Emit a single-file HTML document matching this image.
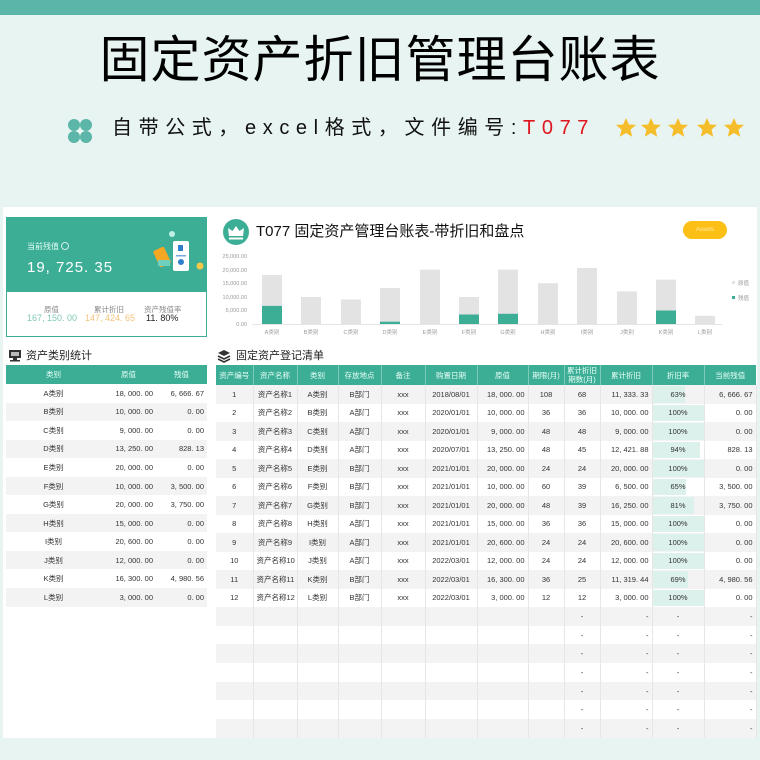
<!DOCTYPE html>
<html><head><meta charset="utf-8">
<style>
*{margin:0;padding:0;box-sizing:border-box}
body{width:760px;height:760px;background:#e8f4f2;position:relative;overflow:hidden;font-family:"Liberation Sans","Noto Sans CJK SC",sans-serif;color:#333}
.abs{position:absolute}
.top{left:0;top:0;width:760px;height:15px;background:#5bb5a8}
.title{left:0;top:28px;width:760px;text-align:center;font-size:50px;color:#000;letter-spacing:1px;line-height:64px}
.sub{left:112px;top:114px;font-size:20px;letter-spacing:6.6px;color:#111;line-height:28px}
.sub span{color:#e0141e}
.panel{background:#fff}
table{border-collapse:collapse;table-layout:fixed;position:absolute;font-size:7.5px}
td{text-align:center;white-space:nowrap;overflow:hidden;color:#333;padding:0 3px}
th{background:#3dae96;color:#e8fff8;font-weight:normal;font-size:7.5px;border-right:1px solid #7fcab9;line-height:9px}
tr.g td{background:#f3f3f3}
.rt td.r{text-align:right}
.rb td{border-right:1px solid #e6e6e6}
.rate{position:relative}
.rate i{position:absolute;left:0;top:1px;bottom:1px;background:#dcf1eb;display:block}
.rate b{position:relative;font-weight:normal}
</style></head><body>
<div class="abs top"></div>
<div class="abs" style="left:3px;top:207px;width:754px;height:531px;background:#fff"></div>
<div class="abs title">固定资产折旧管理台账表</div>
<svg class="abs" style="left:67px;top:118px" width="26" height="26" viewBox="0 0 26 26">
<g fill="#5bb5a8"><circle cx="7" cy="7" r="6"/><circle cx="19" cy="7" r="6"/><circle cx="7" cy="19" r="6"/><circle cx="19" cy="19" r="6"/></g></svg>
<div class="abs sub">自带公式，excel格式，文件编号:<span>T077</span></div>
<svg class="abs" style="left:614px;top:116px" width="136" height="24" viewBox="0 0 136 24">
<defs><path id="st" d="M0,-10 L2.9,-3.5 10,-3.1 4.5,1.6 6.2,8.8 0,5 -6.2,8.8 -4.5,1.6 -10,-3.1 -2.9,-3.5Z" fill="#f6bd2a"/></defs>
<use href="#st" x="12" y="12"/><use href="#st" x="37" y="12"/><use href="#st" x="64" y="12"/><use href="#st" x="93" y="12"/><use href="#st" x="120" y="12"/></svg>

<!-- left top card -->
<div class="abs" style="left:6px;top:217px;width:201px;height:75px;background:#3dae96"></div>
<div class="abs" style="left:27px;top:241px;font-size:8px;color:#e6fff8">当前残值 <span style="display:inline-block;width:8px;height:8px;border-radius:50%;border:1px solid #cfeee6;vertical-align:-1px"></span></div>
<div class="abs" style="left:27px;top:259px;font-size:15px;color:#fff;letter-spacing:1px">19, 725. 35</div>
<svg class="abs" style="left:150px;top:230px" width="60" height="52" viewBox="0 0 60 52">
<circle cx="22" cy="4" r="3" fill="#bff0e6"/>
<rect x="6" y="18" width="12" height="18" rx="2" fill="#f5a623" transform="rotate(-25 12 27)"/>
<rect x="8" y="30" width="12" height="6" fill="#6fd0bd"/>
<rect x="23" y="11" width="16" height="30" rx="2" fill="#fff"/>
<rect x="28" y="15" width="5" height="6" fill="#2f7fd0"/>
<rect x="26" y="25" width="10" height="1.5" fill="#7aa8e0"/>
<circle cx="31" cy="32" r="3" fill="#2f7fd0"/>
<circle cx="50" cy="36" r="3.5" fill="#f8c84a"/>
</svg>
<div class="abs" style="left:6px;top:292px;width:201px;height:45px;background:#fff;border:1px solid #3dae96;border-top:none"></div>
<div class="abs" style="left:44px;top:304px;font-size:7.5px;color:#888">原值</div>
<div class="abs" style="left:94px;top:304px;font-size:7.5px;color:#888">累计折旧</div>
<div class="abs" style="left:144px;top:304px;font-size:7.5px;color:#888">资产残值率</div>
<div class="abs" style="left:27px;top:313px;font-size:9px;color:#7fc8b7">167, 150. 00</div>
<div class="abs" style="left:85px;top:313px;font-size:9px;color:#f4c37a">147, 424. 65</div>
<div class="abs" style="left:146px;top:313px;font-size:9px;color:#222">11. 80%</div>

<!-- left table panel -->
<svg class="abs" style="left:8px;top:349px" width="14" height="13" viewBox="0 0 14 13"><rect x="1" y="1" width="12" height="8" fill="#333"/><rect x="3" y="3" width="8" height="4" fill="#bbb"/><rect x="5" y="9" width="4" height="2" fill="#333"/><rect x="2" y="11" width="10" height="1.5" fill="#333"/></svg>
<div class="abs" style="left:26px;top:347px;font-size:11px;color:#222">资产类别统计</div>
<table class="rt" style="left:6px;top:365px;width:201px">
<colgroup><col style="width:95px"><col style="width:55px"><col style="width:51px"></colgroup>
<tr style="height:19px"><th style="border:none">类别</th><th style="border:none">原值</th><th style="border:none">残值</th></tr>
<tr style="height:18.55px"><td>A类别</td><td class="r">18, 000. 00</td><td class="r">6, 666. 67</td></tr>
<tr class="g" style="height:18.55px"><td>B类别</td><td class="r">10, 000. 00</td><td class="r">0. 00</td></tr>
<tr style="height:18.55px"><td>C类别</td><td class="r">9, 000. 00</td><td class="r">0. 00</td></tr>
<tr class="g" style="height:18.55px"><td>D类别</td><td class="r">13, 250. 00</td><td class="r">828. 13</td></tr>
<tr style="height:18.55px"><td>E类别</td><td class="r">20, 000. 00</td><td class="r">0. 00</td></tr>
<tr class="g" style="height:18.55px"><td>F类别</td><td class="r">10, 000. 00</td><td class="r">3, 500. 00</td></tr>
<tr style="height:18.55px"><td>G类别</td><td class="r">20, 000. 00</td><td class="r">3, 750. 00</td></tr>
<tr class="g" style="height:18.55px"><td>H类别</td><td class="r">15, 000. 00</td><td class="r">0. 00</td></tr>
<tr style="height:18.55px"><td>I类别</td><td class="r">20, 600. 00</td><td class="r">0. 00</td></tr>
<tr class="g" style="height:18.55px"><td>J类别</td><td class="r">12, 000. 00</td><td class="r">0. 00</td></tr>
<tr style="height:18.55px"><td>K类别</td><td class="r">16, 300. 00</td><td class="r">4, 980. 56</td></tr>
<tr class="g" style="height:18.55px"><td>L类别</td><td class="r">3, 000. 00</td><td class="r">0. 00</td></tr>
</table>

<!-- chart panel -->
<svg class="abs" style="left:222px;top:218px" width="28" height="28" viewBox="0 0 28 28"><circle cx="14" cy="14" r="13" fill="#3dae96"/><path d="M7,18 L6,10 L10.5,13 L14,8 L17.5,13 L22,10 L21,18Z" fill="#fff"/><rect x="7" y="19.5" width="14" height="2" fill="#fff"/></svg>
<div class="abs" style="left:256px;top:220px;font-size:15px;color:#111">T077 固定资产管理台账表-带折旧和盘点</div>
<div class="abs" style="left:683px;top:221px;width:44px;height:18px;border-radius:9px;background:#fbbf16;color:#ffe9a8;font-size:6px;text-align:center;line-height:18px">Assets</div>
<svg class="abs" style="left:215px;top:245px" width="545" height="95" viewBox="215 245 545 95" font-size="5.5" fill="#999" font-family="Liberation Sans, Noto Sans CJK SC, sans-serif">
<g text-anchor="end"><text x="247" y="258">25,000.00</text><text x="247" y="272">20,000.00</text><text x="247" y="285">15,000.00</text><text x="247" y="299">10,000.00</text><text x="247" y="312">5,000.00</text><text x="247" y="326">0.00</text></g>
<line x1="252" y1="324.5" x2="722" y2="324.5" stroke="#e6e6e6" stroke-width="1"/>
<g fill="#e3e3e3">
<rect x="262" y="275" width="20" height="49"/><rect x="301" y="297" width="20" height="27"/><rect x="341" y="299.5" width="20" height="24.5"/><rect x="380" y="288" width="20" height="36"/><rect x="420" y="269.6" width="20" height="54.4"/><rect x="459" y="297" width="20" height="27"/><rect x="498" y="269.6" width="20" height="54.4"/><rect x="538" y="283.2" width="20" height="40.8"/><rect x="577" y="268" width="20" height="56"/><rect x="617" y="291.4" width="20" height="32.6"/><rect x="656" y="279.7" width="20" height="44.3"/><rect x="695" y="315.8" width="20" height="8.2"/></g>
<g fill="#3dae96"><rect x="262" y="305.9" width="20" height="18.1"/><rect x="380" y="321.7" width="20" height="2.3"/><rect x="459" y="314.5" width="20" height="9.5"/><rect x="498" y="313.8" width="20" height="10.2"/><rect x="656" y="310.5" width="20" height="13.5"/></g>
<g text-anchor="middle"><text x="272" y="334">A类别</text><text x="311" y="334">B类别</text><text x="351" y="334">C类别</text><text x="390" y="334">D类别</text><text x="430" y="334">E类别</text><text x="469" y="334">F类别</text><text x="508" y="334">G类别</text><text x="548" y="334">H类别</text><text x="587" y="334">I类别</text><text x="627" y="334">J类别</text><text x="666" y="334">K类别</text><text x="705" y="334">L类别</text></g>
<rect x="732" y="281" width="3" height="3" fill="#e3e3e3"/><text x="738" y="285">原值</text>
<rect x="732" y="296" width="3" height="3" fill="#3dae96"/><text x="738" y="300">残值</text>
</svg>

<!-- right table -->
<svg class="abs" style="left:217px;top:349px" width="14" height="14" viewBox="0 0 14 14"><path d="M7,1 L13,4 L7,7 L1,4Z" fill="#333"/><path d="M1,7 L7,10 L13,7 M1,10 L7,13 L13,10" stroke="#333" stroke-width="1.6" fill="none"/></svg>
<div class="abs" style="left:236px;top:347px;font-size:11px;color:#222">固定资产登记清单</div>
<table class="rt rb" style="left:216px;top:365px;width:540px">
<colgroup><col style="width:37px"><col style="width:44px"><col style="width:41px"><col style="width:43px"><col style="width:44px"><col style="width:52px"><col style="width:51px"><col style="width:36px"><col style="width:36px"><col style="width:52px"><col style="width:52px"><col style="width:52px"></colgroup>
<tr style="height:20px"><th>资产编号</th><th>资产名称</th><th>类别</th><th>存放地点</th><th>备注</th><th>购置日期</th><th>原值</th><th>期限(月)</th><th>累计折旧<br>期数(月)</th><th>累计折旧</th><th>折旧率</th><th style="border:none">当前残值</th></tr>
<tr class="g" style="height:18.5px"><td>1</td><td>资产名称1</td><td>A类别</td><td>B部门</td><td>xxx</td><td>2018/08/01</td><td class="r">18, 000. 00</td><td>108</td><td>68</td><td class="r">11, 333. 33</td><td class="rate"><i style="width:63%"></i><b>63%</b></td><td class="r">6, 666. 67</td></tr>
<tr style="height:18.5px"><td>2</td><td>资产名称2</td><td>B类别</td><td>A部门</td><td>xxx</td><td>2020/01/01</td><td class="r">10, 000. 00</td><td>36</td><td>36</td><td class="r">10, 000. 00</td><td class="rate"><i style="width:100%"></i><b>100%</b></td><td class="r">0. 00</td></tr>
<tr class="g" style="height:18.5px"><td>3</td><td>资产名称3</td><td>C类别</td><td>A部门</td><td>xxx</td><td>2020/01/01</td><td class="r">9, 000. 00</td><td>48</td><td>48</td><td class="r">9, 000. 00</td><td class="rate"><i style="width:100%"></i><b>100%</b></td><td class="r">0. 00</td></tr>
<tr style="height:18.5px"><td>4</td><td>资产名称4</td><td>D类别</td><td>A部门</td><td>xxx</td><td>2020/07/01</td><td class="r">13, 250. 00</td><td>48</td><td>45</td><td class="r">12, 421. 88</td><td class="rate"><i style="width:94%"></i><b>94%</b></td><td class="r">828. 13</td></tr>
<tr class="g" style="height:18.5px"><td>5</td><td>资产名称5</td><td>E类别</td><td>B部门</td><td>xxx</td><td>2021/01/01</td><td class="r">20, 000. 00</td><td>24</td><td>24</td><td class="r">20, 000. 00</td><td class="rate"><i style="width:100%"></i><b>100%</b></td><td class="r">0. 00</td></tr>
<tr style="height:18.5px"><td>6</td><td>资产名称6</td><td>F类别</td><td>B部门</td><td>xxx</td><td>2021/01/01</td><td class="r">10, 000. 00</td><td>60</td><td>39</td><td class="r">6, 500. 00</td><td class="rate"><i style="width:65%"></i><b>65%</b></td><td class="r">3, 500. 00</td></tr>
<tr class="g" style="height:18.5px"><td>7</td><td>资产名称7</td><td>G类别</td><td>B部门</td><td>xxx</td><td>2021/01/01</td><td class="r">20, 000. 00</td><td>48</td><td>39</td><td class="r">16, 250. 00</td><td class="rate"><i style="width:81%"></i><b>81%</b></td><td class="r">3, 750. 00</td></tr>
<tr style="height:18.5px"><td>8</td><td>资产名称8</td><td>H类别</td><td>A部门</td><td>xxx</td><td>2021/01/01</td><td class="r">15, 000. 00</td><td>36</td><td>36</td><td class="r">15, 000. 00</td><td class="rate"><i style="width:100%"></i><b>100%</b></td><td class="r">0. 00</td></tr>
<tr class="g" style="height:18.5px"><td>9</td><td>资产名称9</td><td>I类别</td><td>A部门</td><td>xxx</td><td>2021/01/01</td><td class="r">20, 600. 00</td><td>24</td><td>24</td><td class="r">20, 600. 00</td><td class="rate"><i style="width:100%"></i><b>100%</b></td><td class="r">0. 00</td></tr>
<tr style="height:18.5px"><td>10</td><td>资产名称10</td><td>J类别</td><td>A部门</td><td>xxx</td><td>2022/03/01</td><td class="r">12, 000. 00</td><td>24</td><td>24</td><td class="r">12, 000. 00</td><td class="rate"><i style="width:100%"></i><b>100%</b></td><td class="r">0. 00</td></tr>
<tr class="g" style="height:18.5px"><td>11</td><td>资产名称11</td><td>K类别</td><td>B部门</td><td>xxx</td><td>2022/03/01</td><td class="r">16, 300. 00</td><td>36</td><td>25</td><td class="r">11, 319. 44</td><td class="rate"><i style="width:69%"></i><b>69%</b></td><td class="r">4, 980. 56</td></tr>
<tr style="height:18.5px"><td>12</td><td>资产名称12</td><td>L类别</td><td>B部门</td><td>xxx</td><td>2022/03/01</td><td class="r">3, 000. 00</td><td>12</td><td>12</td><td class="r">3, 000. 00</td><td class="rate"><i style="width:100%"></i><b>100%</b></td><td class="r">0. 00</td></tr>
<tr class="g" style="height:18.7px"><td></td><td></td><td></td><td></td><td></td><td></td><td></td><td></td><td>-</td><td class="r">-</td><td>-</td><td class="r">-</td></tr>
<tr style="height:18.7px"><td></td><td></td><td></td><td></td><td></td><td></td><td></td><td></td><td>-</td><td class="r">-</td><td>-</td><td class="r">-</td></tr>
<tr class="g" style="height:18.7px"><td></td><td></td><td></td><td></td><td></td><td></td><td></td><td></td><td>-</td><td class="r">-</td><td>-</td><td class="r">-</td></tr>
<tr style="height:18.7px"><td></td><td></td><td></td><td></td><td></td><td></td><td></td><td></td><td>-</td><td class="r">-</td><td>-</td><td class="r">-</td></tr>
<tr class="g" style="height:18.7px"><td></td><td></td><td></td><td></td><td></td><td></td><td></td><td></td><td>-</td><td class="r">-</td><td>-</td><td class="r">-</td></tr>
<tr style="height:18.7px"><td></td><td></td><td></td><td></td><td></td><td></td><td></td><td></td><td>-</td><td class="r">-</td><td>-</td><td class="r">-</td></tr>
<tr class="g" style="height:18.7px"><td></td><td></td><td></td><td></td><td></td><td></td><td></td><td></td><td>-</td><td class="r">-</td><td>-</td><td class="r">-</td></tr>
</table>
</body></html>
